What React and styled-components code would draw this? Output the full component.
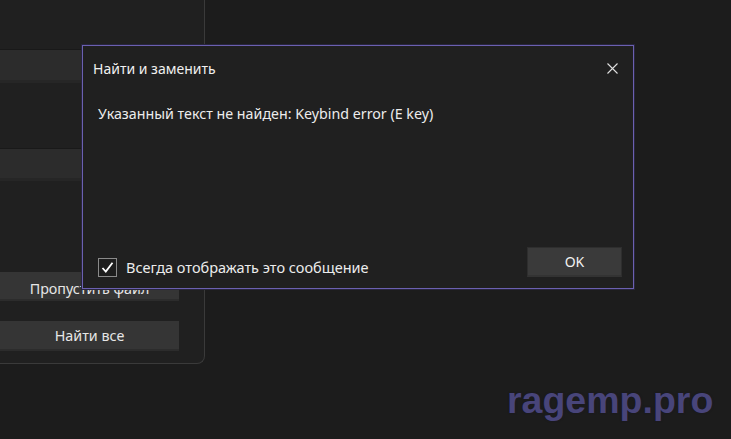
import React from "react";
import styled, { createGlobalStyle } from "styled-components";

const GlobalStyle = createGlobalStyle`
    html, body {
        margin: 0;
        padding: 0;
        background-color: #1c1c1c;
        font-family: "Noto Sans", "Open Sans", sans-serif;
    }
`;

const Screen = styled.main`
    position: relative;
    width: 731px;
    height: 439px;
    overflow: hidden;
    background-color: #1c1c1c;
`;

const Panel = styled.section`
    box-sizing: border-box;
    width: 205px;
    height: 364px;
    display: flex;
    flex-direction: column;
    padding: 49px 25px 0 0;
    background-color: #202020;
    border-right: 1px solid #3a3a3a;
    border-bottom: 1px solid #3a3a3a;
    border-bottom-right-radius: 8px;
`;

const Strip = styled.div`
    box-sizing: border-box;
    height: ${(p) => p.$h}px;
    margin-top: ${(p) => p.$mt}px;
    margin-right: -25px;
    background-color: #2c2c2c;
    border-top: 1px solid #191919;
    border-bottom: 3px solid #262626;
`;

const PanelButton = styled.button`
    box-sizing: border-box;
    height: ${(p) => p.$h}px;
    margin-top: ${(p) => p.$mt}px;
    padding: ${(p) => p.$pt || 0}px 0 0;
    background-color: #353535;
    border: none;
    border-bottom: 2px solid #2c2c2c;
    color: #e6e6e6;
    font-family: inherit;
    font-size: 14.3px;
    text-align: center;
`;

const Dialog = styled.div`
    position: absolute;
    left: 82px;
    top: 45px;
    box-sizing: border-box;
    width: 552px;
    height: 244px;
    display: flex;
    flex-direction: column;
    background-color: #202020;
    border: 1px solid #6b60b0;
    box-shadow: 0 0 0 1px #28253d;
`;

const Header = styled.header`
    height: 45px;
    display: flex;
    align-items: center;
    justify-content: space-between;
    padding: 0 13px 0 10px;
`;

const Title = styled.h2`
    margin: 0;
    font-size: 14px;
    font-weight: 400;
    color: #f0f0f0;
`;

const CloseButton = styled.button`
    width: 16px;
    height: 16px;
    padding: 0;
    border: none;
    background: transparent;
    display: flex;
    align-items: center;
    justify-content: center;
`;

const Message = styled.p`
    flex: 1;
    margin: 13px 0 0 15px;
    font-size: 14.25px;
    color: #ececec;
`;

const Footer = styled.footer`
    display: flex;
    align-items: center;
    justify-content: space-between;
    padding: 0 11px 11px 15px;
`;

const CheckLabel = styled.label`
    display: flex;
    align-items: center;
    gap: 9px;
    margin-top: 10px;
    font-size: 14.5px;
    color: #ececec;
`;

const Box = styled.span`
    box-sizing: border-box;
    width: 19px;
    height: 19px;
    display: flex;
    align-items: center;
    justify-content: center;
    border: 1px solid #8a8a8a;
    background-color: #1d1d1d;
`;

const OkButton = styled.button`
    box-sizing: border-box;
    width: 95px;
    height: 30px;
    background-color: #3a3a3a;
    border: 1px solid #2e2e2e;
    border-bottom: 2px solid #333;
    color: #f2f2f2;
    font-family: inherit;
    font-size: 14px;
`;

const Watermark = styled.div`
    position: absolute;
    left: 507px;
    top: 379px;
    font-family: "Liberation Sans", Arial, sans-serif;
    font-weight: 700;
    font-size: 37.5px;
    color: #48457a;
    text-shadow: 0 0 2px rgba(20, 18, 40, 0.6);
`;

const App = () => {
    return (
        <>
            <GlobalStyle />
            <Screen>
                <Panel>
                    <Strip $h={34} $mt={0} />
                    <Strip $h={33} $mt={65} />
                    <PanelButton $h={29} $mt={91} $pt={6}>Пропустить файл</PanelButton>
                    <PanelButton $h={30} $mt={20}>Найти все</PanelButton>
                </Panel>
                <Dialog>
                    <Header>
                        <Title>Найти и заменить</Title>
                        <CloseButton>
                            <svg width="11" height="11" viewBox="0 0 11 11">
                                <path d="M0.5 0.5 L10.5 10.5 M10.5 0.5 L0.5 10.5" stroke="#e0e0e0" strokeWidth="1.1" />
                            </svg>
                        </CloseButton>
                    </Header>
                    <Message>Указанный текст не найден: Keybind error (E key)</Message>
                    <Footer>
                        <CheckLabel>
                            <Box>
                                <svg width="13" height="13" viewBox="0 0 13 13">
                                    <path d="M1.5 7 L4.8 10.5 L11.5 1.8" fill="none" stroke="#ffffff" strokeWidth="1.8" />
                                </svg>
                            </Box>
                            Всегда отображать это сообщение
                        </CheckLabel>
                        <OkButton>OK</OkButton>
                    </Footer>
                </Dialog>
                <Watermark>ragemp.pro</Watermark>
            </Screen>
        </>
    );
};

export default App;
